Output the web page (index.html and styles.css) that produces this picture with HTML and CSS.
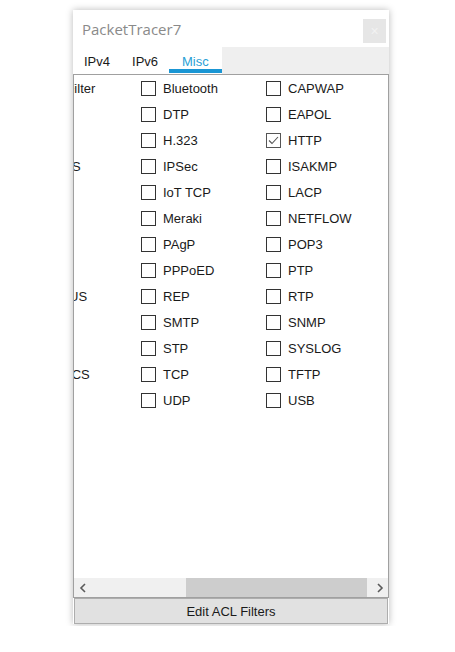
FILE: index.html
```html
<!DOCTYPE html>
<html lang="en">

<head>
    <meta charset="UTF-8">
    <meta name="viewport" content="width=device-width, initial-scale=1.0">
    <title>PacketTracer7</title>
    <link rel="stylesheet" href="styles.css">
</head>

<body>
    <div class="window">
        <div class="titlebar">
            <span class="title">PacketTracer7</span>
            <button class="close">&#215;</button>
        </div>

        <div class="tabs">
            <div class="tab">IPv4</div>
            <div class="tab">IPv6</div>
            <div class="tab active">Misc</div>
            <div class="tabs-fill"></div>
        </div>

        <div class="panel">
            <div class="list">
                <div class="grid">
                    <!-- first column is scrolled out of view -->
                    <label class="item"><span class="box"></span>ACL Filter</label>
                    <label class="item"><span class="box"></span>ARP</label>
                    <label class="item"><span class="box"></span>CDP</label>
                    <label class="item"><span class="box"></span>HTTPS</label>
                    <label class="item"><span class="box"></span>ICMP</label>
                    <label class="item"><span class="box"></span>LLDP</label>
                    <label class="item"><span class="box"></span>NDP</label>
                    <label class="item"><span class="box"></span>NTP</label>
                    <label class="item"><span class="box"></span>RADIUS</label>
                    <label class="item"><span class="box"></span>RIP</label>
                    <label class="item"><span class="box"></span>SSH</label>
                    <label class="item"><span class="box"></span>TACACS</label>
                    <label class="item"><span class="box"></span>VTP</label>

                    <label class="item"><span class="box"></span>Bluetooth</label>
                    <label class="item"><span class="box"></span>DTP</label>
                    <label class="item"><span class="box"></span>H.323</label>
                    <label class="item"><span class="box"></span>IPSec</label>
                    <label class="item"><span class="box"></span>IoT TCP</label>
                    <label class="item"><span class="box"></span>Meraki</label>
                    <label class="item"><span class="box"></span>PAgP</label>
                    <label class="item"><span class="box"></span>PPPoED</label>
                    <label class="item"><span class="box"></span>REP</label>
                    <label class="item"><span class="box"></span>SMTP</label>
                    <label class="item"><span class="box"></span>STP</label>
                    <label class="item"><span class="box"></span>TCP</label>
                    <label class="item"><span class="box"></span>UDP</label>

                    <label class="item"><span class="box"></span>CAPWAP</label>
                    <label class="item"><span class="box"></span>EAPOL</label>
                    <label class="item"><span class="box checked"><svg width="13" height="13" viewBox="0 0 13 13"><polyline points="2,6.5 5,9.5 11,3" fill="none" stroke="#555" stroke-width="1.1" /></svg></span>HTTP</label>
                    <label class="item"><span class="box"></span>ISAKMP</label>
                    <label class="item"><span class="box"></span>LACP</label>
                    <label class="item"><span class="box"></span>NETFLOW</label>
                    <label class="item"><span class="box"></span>POP3</label>
                    <label class="item"><span class="box"></span>PTP</label>
                    <label class="item"><span class="box"></span>RTP</label>
                    <label class="item"><span class="box"></span>SNMP</label>
                    <label class="item"><span class="box"></span>SYSLOG</label>
                    <label class="item"><span class="box"></span>TFTP</label>
                    <label class="item"><span class="box"></span>USB</label>
                </div>
            </div>

            <div class="scrollbar">
                <div class="arrow">
                    <svg width="8" height="10" viewBox="0 0 8 10"><polyline points="6,1 2,5 6,9" fill="none" stroke="#5a5a5a" stroke-width="1.6" /></svg>
                </div>
                <div class="track">
                    <div class="thumb"></div>
                </div>
                <div class="arrow">
                    <svg width="8" height="10" viewBox="0 0 8 10"><polyline points="2,1 6,5 2,9" fill="none" stroke="#5a5a5a" stroke-width="1.6" /></svg>
                </div>
            </div>
        </div>

        <button class="edit-btn">Edit ACL Filters</button>
    </div>
</body>

</html>
```

FILE: styles.css
```css
body {
    margin: 0;
    background: #fff;
    font-family: "Liberation Sans", Arial, sans-serif;
    font-size: 13px;
    color: #1a1a1a;
}

.window {
    width: 316px;
    margin: 10px 0 0 73px;
    background: #fff;
    box-shadow: 0 0 7px rgba(0, 0, 0, 0.28);
}

.titlebar {
    height: 37px;
    display: flex;
    justify-content: space-between;
    align-items: flex-start;
    padding: 0 3px 0 9px;
}

.title {
    margin-top: 9px;
    font-family: "Open Sans", sans-serif;
    font-size: 15px;
    color: #8a8a8a;
}

.close {
    margin-top: 9px;
    width: 23px;
    height: 24px;
    padding: 0;
    border: none;
    background: #e6e6e6;
    color: #f2f2f2;
    font-size: 14px;
}

.tabs {
    display: flex;
    height: 27px;
}

.tab {
    position: relative;
    padding: 1px 11px 0;
    line-height: 27px;
}

.tab.active {
    padding: 1px 13px 0;
    color: #2a9fd6;
}

.tab.active::after {
    content: "";
    position: absolute;
    left: 0;
    right: 0;
    bottom: 1px;
    height: 4px;
    background: #1a96d4;
}

.tabs-fill {
    flex: 1;
    background: #efefef;
}

.panel {
    height: 522px;
    border: 1px solid #a0a0a0;
    display: flex;
    flex-direction: column;
}

.list {
    flex: 1;
    overflow: hidden;
}

.grid {
    margin-left: -58px;
    display: grid;
    grid-template-columns: repeat(3, 125px);
    grid-template-rows: repeat(13, 26px);
    grid-auto-flow: column;
}

.item {
    display: flex;
    align-items: center;
    gap: 7px;
    white-space: nowrap;
}

.box {
    width: 13px;
    height: 13px;
    border: 1px solid #333;
    background: #fff;
    flex-shrink: 0;
}

.box svg {
    display: block;
}

.box.checked {
    border-color: #555;
}

.scrollbar {
    height: 19px;
    display: flex;
    background: #f0f0f0;
}

.arrow {
    width: 17px;
    display: flex;
    align-items: center;
    justify-content: center;
}

.track {
    flex: 1;
}

.thumb {
    margin-left: 95px;
    width: 181px;
    height: 100%;
    background: #cdcdcd;
}

.edit-btn {
    display: block;
    width: 314px;
    height: 26px;
    margin: 0 1px 2px 1px;
    padding: 0;
    border: 1px solid #adadad;
    background: #e1e1e1;
    font-family: "Liberation Sans", Arial, sans-serif;
    font-size: 13px;
    color: #1a1a1a;
}
```
